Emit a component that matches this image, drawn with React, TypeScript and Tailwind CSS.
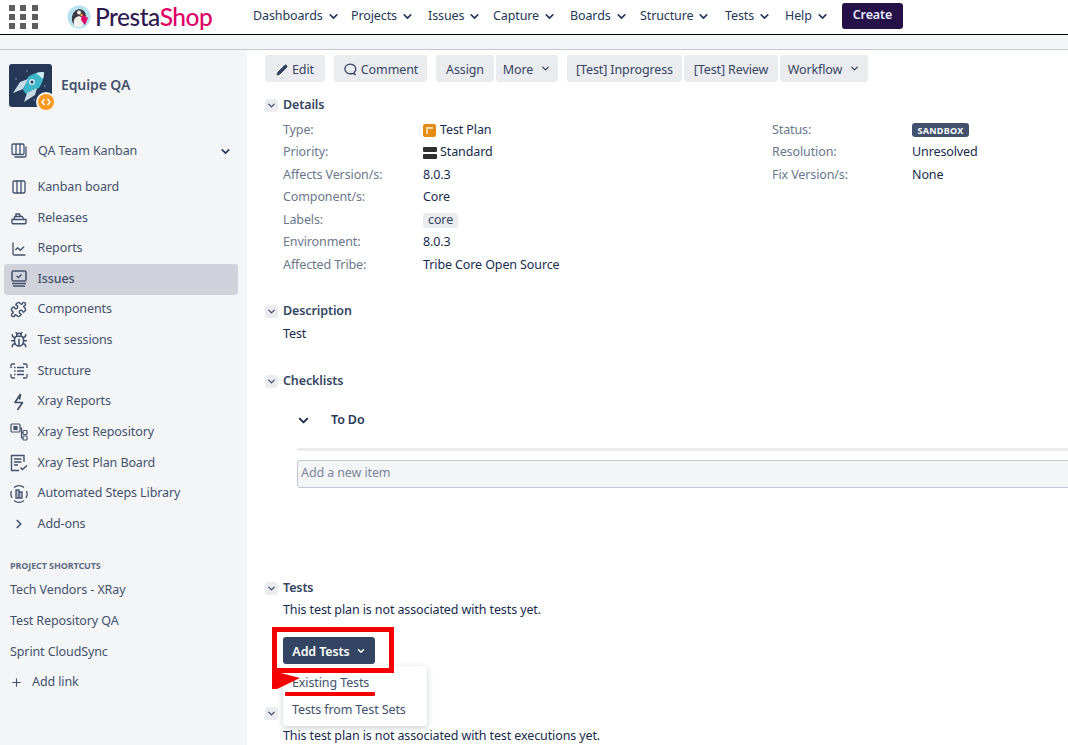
import { Bug, ChartLine, ChevronDown, ChevronRight, Columns3, Pencil, Plus, Puzzle } from "lucide-react";
import React from "react";

const navItems = [
  { name: "Dashboards", w: "w-[98px]" },
  { name: "Projects", w: "w-[77px]" },
  { name: "Issues", w: "w-[65px]" },
  { name: "Capture", w: "w-[77px]" },
  { name: "Boards", w: "w-[70px]" },
  { name: "Structure", w: "w-[85px]" },
  { name: "Tests", w: "w-[60px]" },
  { name: "Help", w: "w-[57px]" },
];

function ShipIcon() {
  return (
    <svg width="16" height="16" viewBox="0 0 16 16" fill="none" stroke="currentColor" strokeWidth="1.4">
      <path d="M1 9.500h14v3.200a1 1 0 0 1-1 1H2a1 1 0 0 1-1-1z" />
      <path d="M3 9.500l.8-3h7.400l1.800 3M5 6.500v-2.500h3.500l1 2.500" />
    </svg>
  );
}

function IssuesIcon() {
  return (
    <svg width="16" height="18" viewBox="0 0 16 18" fill="none" stroke="currentColor" strokeWidth="1.5">
      <rect x="1" y="1" width="14" height="10" rx="1.500" />
      <path d="M5.500 6l2 1.500L10.500 4.500M1 13.500h14M2 16h12" />
    </svg>
  );
}

function StructureIcon() {
  return (
    <svg width="18" height="16" viewBox="0 0 18 16" fill="none" stroke="currentColor" strokeWidth="1.3">
      <path d="M1 5V2.500A1.500 1.500 0 0 1 2.500 1H5M13 1h2.500A1.500 1.500 0 0 1 17 2.500V5M17 11v2.500a1.500 1.500 0 0 1-1.500 1.500H13M5 15H2.500A1.500 1.500 0 0 1 1 13.500V11" />
      <path d="M4 4.500h1.500M7 4.500h7M4 8h1.500M7 8h7M4 11.500h1.500M7 11.500h7" />
    </svg>
  );
}

function BoltIcon() {
  return (
    <svg width="12" height="18" viewBox="0 0 12 18" fill="none" stroke="currentColor" strokeWidth="1.700">
      <path d="M7.500 1L2 9.500h7.500L4.500 17M7.500 1L6.500 6.500" strokeLinejoin="round" />
    </svg>
  );
}

function RepoIcon() {
  return (
    <svg width="18" height="18" viewBox="0 0 18 18" fill="none" stroke="currentColor" strokeWidth="1.200">
      <rect x="1" y="1" width="9" height="8" rx="1" />
      <rect x="4" y="3.500" width="3" height="3" fill="currentColor" />
      <rect x="13" y="7.500" width="4" height="4" rx="0.800" />
      <rect x="13" y="13" width="4" height="4" rx="0.800" />
      <path d="M10 5h1.500v10H13M11.500 9.500H13" />
    </svg>
  );
}

function PlanBoardIcon() {
  return (
    <svg width="18" height="18" viewBox="0 0 18 18" fill="none" stroke="currentColor" strokeWidth="1.400">
      <path d="M14 8V1.500H1.500v15H9" />
      <path d="M4 5h7.500M4 8h7.500M4 11h4" />
      <path d="M10.500 13.500l2 2 4.500-4" />
    </svg>
  );
}

function StepsIcon() {
  return (
    <svg width="18" height="18" viewBox="0 0 18 18" fill="none" stroke="currentColor" strokeWidth="1.300">
      <path d="M4 2.500A8 8 0 0 1 14 2.500M16.500 6A8 8 0 0 1 16 13M14 15.500a8 8 0 0 1-10 0M2 13A8 8 0 0 1 1.500 6" />
      <path d="M6 5h3v8H6zM9 7h3v6H9z" fill="currentColor" fillOpacity="0.350" />
    </svg>
  );
}

function KanbanStackIcon() {
  return (
    <svg width="16" height="16" viewBox="0 0 16 16" fill="none" stroke="currentColor" strokeWidth="1.300">
      <rect x="1" y="1" width="12" height="10.500" rx="1.200" />
      <path d="M5 1v10.500M9 1v10.500M15 3.500v9a1.500 1.500 0 0 1-1.500 1.500H3.500" />
    </svg>
  );
}

function ProjectAvatar() {
  return (
    <div className="relative w-[43px] h-[43px] rounded-[3px] bg-[#253858]">
      <svg width="43" height="43" viewBox="0 0 43 43">
        <circle cx="18" cy="7" r="1" fill="#5a7196" />
        <circle cx="7" cy="15" r="1" fill="#5a7196" />
        <circle cx="36" cy="22" r="1" fill="#5a7196" />
        <circle cx="25" cy="36" r="1" fill="#5a7196" />
        <path d="M14 26L19 13Q26 8 35 8Q35 17 30 24L17 30z" fill="#3cb6c8" />
        <path d="M27 9Q31 8 35 8Q35 12 34 15z" fill="#d5ecf2" />
        <path d="M19 15L11 18L4 29L14 25zM28 24L26 31L15 38L18 29z" fill="#c9dbe6" />
        <circle cx="23" cy="18" r="3" fill="#d5ecf2" />
        <circle cx="23" cy="18" r="1.500" fill="#253858" />
      </svg>
      <div className="absolute right-[-2px] bottom-[-3px] w-[16px] h-[16px] rounded-full bg-[#ff991f] ring-2 ring-[#f4f5f7] flex items-center justify-center">
        <svg width="10" height="8" viewBox="0 0 10 8" fill="none" stroke="#fff" strokeWidth="1.500">
          <path d="M3.500 1L1 4l2.500 3M6.500 1L9 4 6.500 7" />
        </svg>
      </div>
    </div>
  );
}

function SideRow({ icon, label, active }: { icon: React.ReactNode; label: string; active?: boolean }) {
  return (
    <div className={`h-[30.640px] ml-1 mr-[9px] flex items-center rounded-[3px] ${active ? "bg-[#d0d3dc] font-medium" : ""}`}>
      <div className="w-[33.500px] flex justify-center text-[#42526e] pr-[4px]">{icon}</div>
      <span>{label}</span>
    </div>
  );
}

function SectionHead({ title }: { title: string }) {
  return (
    <div className="flex items-center h-5">
      <div className="w-[13px] h-[13px] rounded-[3px] bg-[#ebecf0] flex items-center justify-center mr-[5px]">
        <ChevronDown size={11} strokeWidth={3} className="text-[#42526e]" />
      </div>
      <h4 className="font-semibold text-[#344563]">{title}</h4>
    </div>
  );
}

function Btn({ children, w, mr }: { children: React.ReactNode; w: string; mr: string }) {
  return (
    <div className={`h-[27px] pt-[3px] rounded-[3px] bg-[#ebecf0] flex items-center justify-center gap-1 text-[#344563] ${w} ${mr}`}>
      {children}
    </div>
  );
}

function Field({ label, children }: { label: string; children: React.ReactNode }) {
  return (
    <div className="h-[22.500px] flex items-center">
      <div className="w-[140px] text-[#6b778c]">{label}</div>
      <div className="flex items-center text-[#172b4d]">{children}</div>
    </div>
  );
}

export default function App() {
  return (
    <div className="relative w-[1068px] h-[745px] overflow-hidden bg-white text-[12.500px] tracking-[-0.110px] font-['Noto_Sans',sans-serif] text-[#42526e]">
      <header className="h-[35px] border-b border-black flex items-center">
        <div className="w-[31px] ml-[9px] grid grid-cols-3 gap-[3px]">
          {Array.from({ length: 9 }).map((_, i) => (
            <div key={i} className="w-[6px] h-[6px] bg-[#5e5e5e]" />
          ))}
        </div>
        <div className="ml-[27px] flex items-center w-[186px]">
          <svg width="24" height="24" viewBox="0 0 24 24">
            <circle cx="12" cy="12" r="11.500" fill="#b5e2ee" />
            <path d="M5 16Q4 6 12 4Q19 5 19 11L16 12Q10 11 8 14L7 20z" fill="#3e3a45" />
            <path d="M7 15Q8 12 12 11L15 13Q16 19 15 22H8Q6 19 7 15z" fill="#f4f1ea" />
            <circle cx="12" cy="7.500" r="2" fill="#f4f1ea" />
            <path d="M15 9L21 13L18 20L14 15z" fill="#df0067" />
            <path d="M12.500 10l3-1.500v3z" fill="#f6b93b" />
          </svg>
          <span className="ml-[4px] text-[24.500px] leading-none tracking-[-0.500px] font-['Lato',sans-serif] font-medium">
            <span className="text-[#2f1a4f]">Presta</span>
            <span className="text-[#df0067]">Shop</span>
          </span>
        </div>
        {navItems.map((item) => (
          <div key={item.name} className={`-mt-[2px] flex items-center gap-[4px] text-[#253858] ${item.w}`}>
            <span>{item.name}</span>
            <ChevronDown size={13} strokeWidth={3} />
          </div>
        ))}
        <div className="w-[61px] h-[26px] rounded-[3px] bg-[#251048] text-[#e6e8ff] font-semibold flex items-center justify-center -mt-[3px]">
          Create
        </div>
      </header>
      <div className="h-[15px] bg-[#f4f5f7] border-b border-[#c1c7d0]" />

      <div className="flex h-[695px]">
        <aside className="w-[247px] shrink-0 bg-[#f4f5f7]">
          <div className="flex items-center pl-[9px] h-[71px]">
            <ProjectAvatar />
            <span className="ml-[9px] -mt-[2px] text-[14px] font-semibold text-[#42526e]">Equipe QA</span>
          </div>
          <div className="mt-[15px] h-[30px] flex items-center pl-[11px] pr-[15px]">
            <KanbanStackIcon />
            <span className="ml-[11px] flex-1">QA Team Kanban</span>
            <ChevronDown size={13} strokeWidth={3} className="text-[#253858]" />
          </div>
          <div className="mt-[6px]">
            <SideRow icon={<Columns3 size={16} />} label="Kanban board" />
            <SideRow icon={<ShipIcon />} label="Releases" />
            <SideRow icon={<ChartLine size={16} />} label="Reports" />
            <SideRow icon={<IssuesIcon />} label="Issues" active />
            <SideRow icon={<Puzzle size={17} />} label="Components" />
            <SideRow icon={<Bug size={18} />} label="Test sessions" />
            <SideRow icon={<StructureIcon />} label="Structure" />
            <SideRow icon={<BoltIcon />} label="Xray Reports" />
            <SideRow icon={<RepoIcon />} label="Xray Test Repository" />
            <SideRow icon={<PlanBoardIcon />} label="Xray Test Plan Board" />
            <SideRow icon={<StepsIcon />} label="Automated Steps Library" />
            <SideRow icon={<ChevronRight size={14} strokeWidth={3} />} label="Add-ons" />
          </div>
          <div className="mt-[18px] pl-[10px] h-4 flex items-center text-[9px] font-bold text-[#5e6c84] uppercase">
            Project shortcuts
          </div>
          <div className="mt-[2px] pl-[10px]">
            <div className="h-[30.700px] flex items-center">Tech Vendors - XRay</div>
            <div className="h-[30.700px] flex items-center">Test Repository QA</div>
            <div className="h-[30.700px] flex items-center">Sprint CloudSync</div>
            <div className="h-[29.700px] flex items-center">
              <Plus size={13} className="mr-[9px]" />
              Add link
            </div>
          </div>
        </aside>

        <main className="flex-1 pl-[18px] pt-[5px] min-w-0">
          <div className="flex">
            <Btn w="w-[60px]" mr="mr-[9px]"><Pencil size={12} fill="currentColor" />Edit</Btn>
            <Btn w="w-[93px]" mr="mr-[9px]">
              <svg width="14" height="14" viewBox="0 0 14 14" fill="none" stroke="currentColor" strokeWidth="1.300" className="-mt-[2px]">
                <path d="M11 10.500A5.500 4.800 0 1 0 9 11.500L12 12.500z" />
              </svg>
              Comment
            </Btn>
            <Btn w="w-[58px]" mr="mr-[2px]">Assign</Btn>
            <Btn w="w-[62px]" mr="mr-[9px]">More<ChevronDown size={11} strokeWidth={3} className="ml-[3px] -mt-[3px]" /></Btn>
            <Btn w="w-[115px]" mr="mr-[2px]">[Test] Inprogress</Btn>
            <Btn w="w-[94px]" mr="mr-[2px]">[Test] Review</Btn>
            <Btn w="w-[88px]" mr="">Workflow<ChevronDown size={11} strokeWidth={3} className="ml-[3px] -mt-[3px]" /></Btn>
          </div>

          <div className="mt-[13px]"><SectionHead title="Details" /></div>
          <div className="mt-[4px] pl-[18px] flex">
            <div className="w-[489px]">
              <Field label="Type:">
                <span className="w-[13px] h-[13px] mr-[4px] rounded-[2px] bg-[#e38b13] flex items-center justify-center">
                  <span className="w-[7px] h-[7px] border-l-2 border-t-2 border-[#f8d9a8]" />
                </span>
                Test Plan
              </Field>
              <Field label="Priority:">
                <span className="w-[14px] mr-[3px] flex flex-col gap-[2px]">
                  <span className="h-[5px] rounded-[1px] bg-[#2f2f2f]" />
                  <span className="h-[5px] rounded-[1px] bg-[#2f2f2f]" />
                </span>
                Standard
              </Field>
              <Field label="Affects Version/s:">8.0.3</Field>
              <Field label="Component/s:">Core</Field>
              <Field label="Labels:">
                <span className="h-[15px] px-[5px] rounded-[3px] bg-[#ebecf0] text-[#344563] flex items-center">core</span>
              </Field>
              <Field label="Environment:">8.0.3</Field>
              <Field label="Affected Tribe:">Tribe Core Open Source</Field>
            </div>
            <div>
              <Field label="Status:">
                <span className="h-[14px] w-[57px] rounded-[3px] bg-[#42526e] text-white text-[9px] font-bold flex items-center justify-center tracking-[0.300px]">
                  SANDBOX
                </span>
              </Field>
              <Field label="Resolution:">Unresolved</Field>
              <Field label="Fix Version/s:">None</Field>
            </div>
          </div>

          <div className="mt-[25px]"><SectionHead title="Description" /></div>
          <div className="mt-[3px] pl-[18px] h-5 flex items-center text-[#172b4d]">Test</div>

          <div className="mt-[27px]"><SectionHead title="Checklists" /></div>
          <div className="pl-[32px]">
            <div className="mt-[19px] h-5 flex items-center">
              <ChevronDown size={15} strokeWidth={3} className="ml-[-1px] text-[#172b4d]" />
              <span className="ml-[20px] font-semibold text-[#253858]">To Do</span>
            </div>
            <div className="mt-[17px] h-[3px] bg-[#ebecf0]" />
            <div className="mt-[9px] h-[28px] ml-0 mr-[-10px] rounded-[3px] border border-[#c1c7d0] bg-[#f4f5f7] flex items-center pl-[3px] text-[#7a869a]">
              Add a new item
            </div>
          </div>

          <div className="mt-[91px]"><SectionHead title="Tests" /></div>
          <div className="mt-[2px] pl-[18px] h-5 flex items-center text-[#172b4d]">This test plan is not associated with tests yet.</div>
          <div className="mt-[16px] pt-[4px] ml-[18px] w-[92px] h-[27px] rounded-[3px] bg-[#344563] text-white font-semibold flex items-center justify-center gap-[6px]">
            Add Tests
            <ChevronDown size={10} strokeWidth={3.500} className="-mt-[3px]" />
          </div>
          <div className="mt-[40px]"><SectionHead title="" /></div>
          <div className="mt-[3px] pl-[18px] h-5 flex items-center text-[#172b4d]">This test plan is not associated with test executions yet.</div>
        </main>
      </div>

      {/* dropdown + red annotations sit over the page */}
      <div className="absolute left-[283px] top-[666px] w-[144px] h-[60px] pt-[4px] bg-white rounded-[3px] shadow-[0_2px_6px_rgba(9,30,66,0.22)] text-[#42526e]">
        <div className="h-[27px] flex items-center pl-[9px]">Existing Tests</div>
        <div className="h-[27px] flex items-center pl-[9px]">Tests from Test Sets</div>
      </div>
      <div className="absolute left-[272px] top-[627px] w-[122px] h-[46px] border-[5px] border-[#f40000]" />
      <div className="absolute left-[285px] top-[692px] w-[90px] h-[4px] rounded-[1px] bg-[#f40000]" />
      <svg className="absolute left-[272px] top-[670px]" width="30" height="20" viewBox="0 0 30 20">
        <path d="M0 0H5V2L28 8L5 19H0z" fill="#f40000" />
      </svg>
    </div>
  );
}
